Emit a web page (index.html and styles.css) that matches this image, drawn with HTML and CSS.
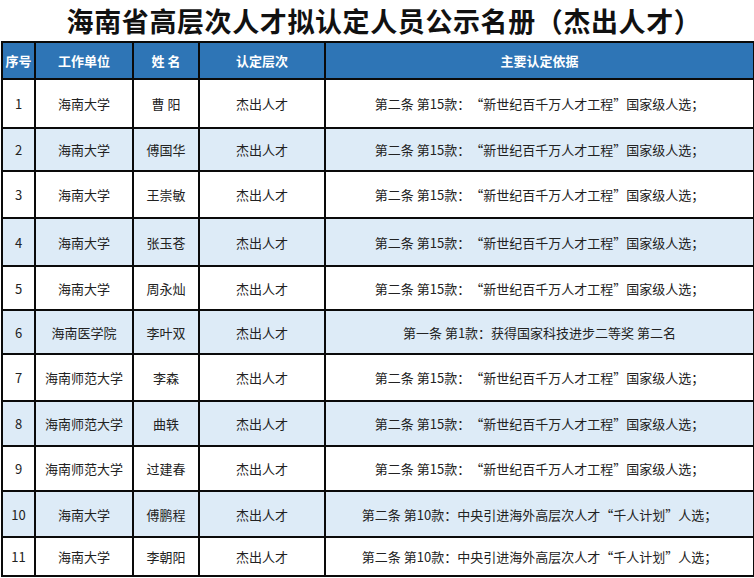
FILE: index.html
```html
<!DOCTYPE html>
<html lang="zh-CN">
<head>
<meta charset="utf-8">
<title>海南省高层次人才拟认定人员公示名册（杰出人才）</title>
<link rel="stylesheet" href="styles.css">
</head>
<body>
<h1 class="title">海南省高层次人才拟认定人员公示名册（杰出人才）</h1>
<table class="roster">
  <colgroup>
    <col class="c-no"><col class="c-unit"><col class="c-name"><col class="c-level"><col class="c-basis">
  </colgroup>
  <thead>
    <tr><th>序号</th><th>工作单位</th><th>姓 名</th><th>认定层次</th><th>主要认定依据</th></tr>
  </thead>
  <tbody>
    <tr><td>1</td><td>海南大学</td><td>曹 阳</td><td>杰出人才</td><td>第二条 第15款：“新世纪百千万人才工程”国家级人选；</td></tr>
    <tr><td>2</td><td>海南大学</td><td>傅国华</td><td>杰出人才</td><td>第二条 第15款：“新世纪百千万人才工程”国家级人选；</td></tr>
    <tr><td>3</td><td>海南大学</td><td>王崇敏</td><td>杰出人才</td><td>第二条 第15款：“新世纪百千万人才工程”国家级人选；</td></tr>
    <tr><td>4</td><td>海南大学</td><td>张玉苍</td><td>杰出人才</td><td>第二条 第15款：“新世纪百千万人才工程”国家级人选；</td></tr>
    <tr><td>5</td><td>海南大学</td><td>周永灿</td><td>杰出人才</td><td>第二条 第15款：“新世纪百千万人才工程”国家级人选；</td></tr>
    <tr><td>6</td><td>海南医学院</td><td>李叶双</td><td>杰出人才</td><td>第一条 第1款：获得国家科技进步二等奖 第二名</td></tr>
    <tr><td>7</td><td>海南师范大学</td><td>李森</td><td>杰出人才</td><td>第二条 第15款：“新世纪百千万人才工程”国家级人选；</td></tr>
    <tr><td>8</td><td>海南师范大学</td><td>曲轶</td><td>杰出人才</td><td>第二条 第15款：“新世纪百千万人才工程”国家级人选；</td></tr>
    <tr><td>9</td><td>海南师范大学</td><td>过建春</td><td>杰出人才</td><td>第二条 第15款：“新世纪百千万人才工程”国家级人选；</td></tr>
    <tr><td>10</td><td>海南大学</td><td>傅鹏程</td><td>杰出人才</td><td>第二条 第10款：中央引进海外高层次人才“千人计划”人选；</td></tr>
    <tr><td>11</td><td>海南大学</td><td>李朝阳</td><td>杰出人才</td><td>第二条 第10款：中央引进海外高层次人才“千人计划”人选；</td></tr>
  </tbody>
</table>
</body>
</html>
```
FILE: styles.css
```css
html, body {
  margin: 0;
  padding: 0;
  background: #ffffff;
}
body {
  font-family: "Noto Sans CJK SC", "Noto Sans", "Liberation Sans", sans-serif;
  color: #1f1f1f;
  width: 754px;
  text-spacing-trim: space-all;
}
.title {
  margin: 0;
  padding-left: 14px;
  height: 41px;
  line-height: 42px;
  font-size: 27px;
  font-weight: 700;
  text-align: center;
  color: #111111;
  letter-spacing: 0.6px;
}
.roster {
  margin-left: 1px;
  width: 752px;
  border-collapse: collapse;
  table-layout: fixed;
  font-size: 13px;
}
.c-no { width: 33px; }
.c-unit { width: 98px; }
.c-name { width: 66px; }
.c-level { width: 126px; }
.c-basis { width: 429px; }
.roster th,
.roster td {
  border: 2px solid #0a0a0a;
  padding: 0;
  text-align: center;
  vertical-align: middle;
  white-space: nowrap;
  overflow: hidden;
}
.roster th {
  background: #2e75b6;
  color: #ffffff;
  font-weight: 700;
  font-size: 13px;
  height: 35px;
}
.roster td {
  color: #222222;
}
.roster tbody tr:nth-child(even) td {
  background: #ddebf7;
}
.roster tbody tr:nth-child(1) td { height: 47px; }
.roster tbody tr:nth-child(2) td { height: 41px; }
.roster tbody tr:nth-child(3) td { height: 45px; }
.roster tbody tr:nth-child(4) td { height: 46px; }
.roster tbody tr:nth-child(5) td { height: 42px; }
.roster tbody tr:nth-child(6) td { height: 42px; }
.roster tbody tr:nth-child(7) td { height: 45px; }
.roster tbody tr:nth-child(8) td { height: 43px; }
.roster tbody tr:nth-child(9) td { height: 43px; }
.roster tbody tr:nth-child(10) td { height: 44px; }
.roster tbody tr:nth-child(11) td { height: 37px; }
```
